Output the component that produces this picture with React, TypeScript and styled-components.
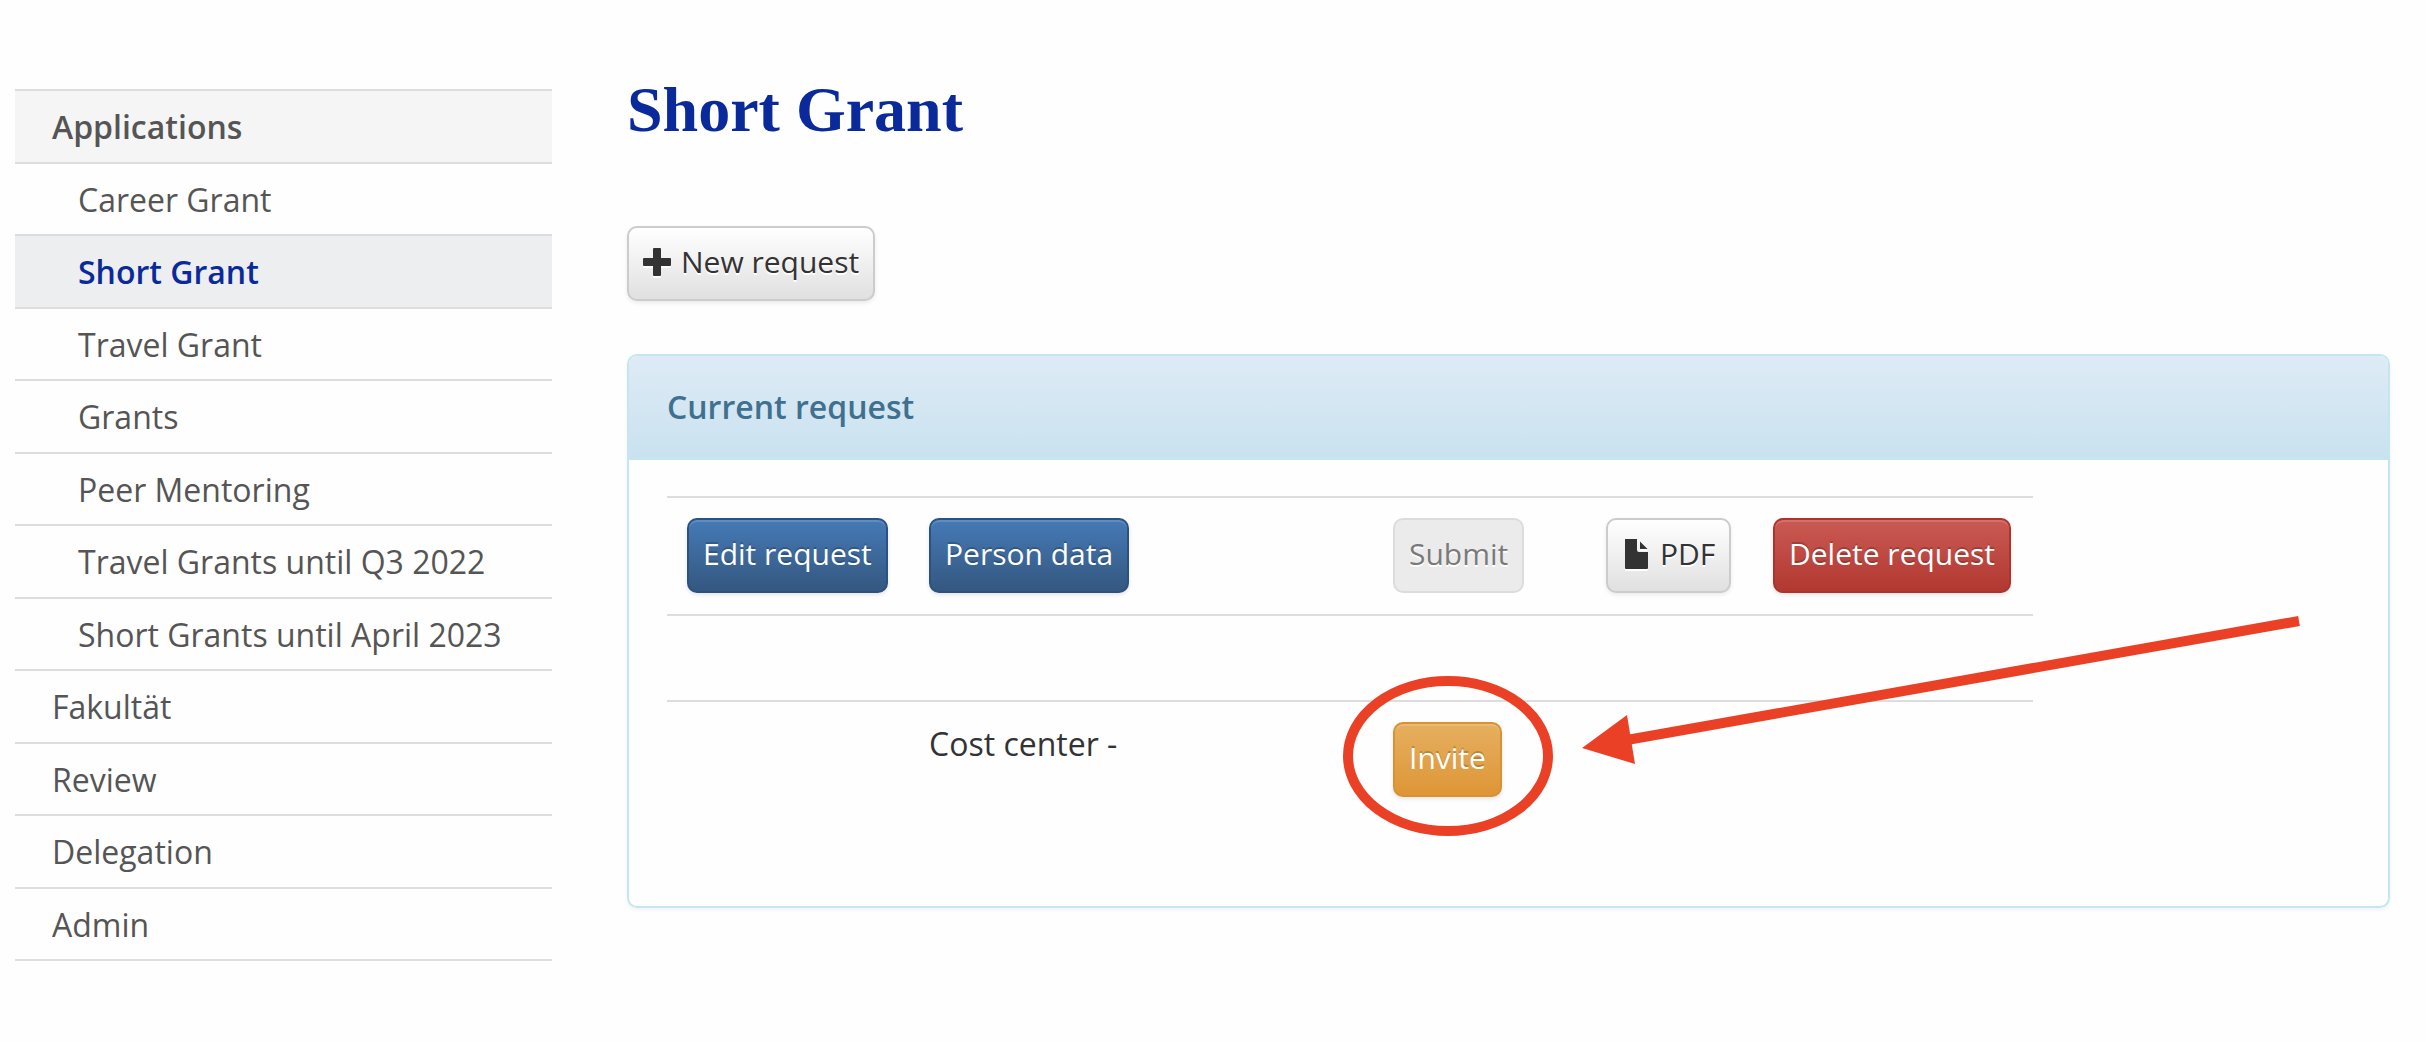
import React from "react";
import styled, { createGlobalStyle, css } from "styled-components";

const GlobalStyle = createGlobalStyle`
  *, *::before, *::after { box-sizing: border-box; }
  body {
    margin: 0;
    background: #fefefe;
    color: #333;
    font-family: "Open Sans", "Noto Sans", sans-serif;
    font-size: 32px;
    line-height: 44px;
  }
`;

const Page = styled.div`
  display: grid;
  grid-template-columns: 537px minmax(0, 1fr);
  column-gap: 75px;
  align-items: start;
  padding: 75px 36px 75px 15px;
`;

const Sidebar = styled.nav`
  margin-top: 14px;
`;

const NavList = styled.ul`
  list-style: none;
  margin: 0;
  padding: 0;
  border-bottom: 2px solid #ddd;
`;

const NavItem = styled.li`
  border-top: 2px solid #ddd;

  &:nth-child(odd) {
    padding-bottom: 1px;
  }
  &:has(> a[data-kind="section"]) {
    background: #f5f5f5;
  }
  &:has(> a[aria-current]) {
    background: #edeef0;
    border-top-color: #d9dce0;
  }
`;

const NavLink = styled.a<{ $nested?: boolean; $strong?: boolean; $active?: boolean }>`
  display: block;
  padding: 14px 16px 12px ${(p) => (p.$nested ? 63 : 37)}px;
  color: ${(p) => (p.$active ? "#0a2a9c" : "#555")};
  font-size: 32px;
  font-weight: ${(p) => (p.$strong || p.$active ? 600 : 400)};
  text-decoration: none;
`;

const Title = styled.h1`
  margin: 0 0 81px;
  color: #0a2a9c;
  font-family: Palatino, "Palatino Linotype", "Liberation Serif", serif;
  font-size: 64px;
  font-weight: 700;
  line-height: 70px;
`;

type Variant = "default" | "primary" | "warning" | "danger";

const variants = {
  default: css`
    color: #333;
    border-color: #ccc;
    background-image: linear-gradient(#fff, #e0e0e0);
    text-shadow: 0 2px 0 #fff;
    box-shadow: 0 2px 4px rgba(0, 0, 0, 0.08);
    svg { filter: drop-shadow(0 2px 0 #fff); }
  `,
  primary: css`
    color: #fff;
    border-color: #2b5280;
    background-image: linear-gradient(#457ab6, #34577f);
  `,
  warning: css`
    color: #fff;
    border-color: #d89134;
    background-image: linear-gradient(#e6af5f, #de9636);
  `,
  danger: css`
    color: #fff;
    border-color: #ad342d;
    background-image: linear-gradient(#ca5a54, #b13830);
  `,
};

const Button = styled.button<{ $variant?: Variant }>`
  display: inline-flex;
  align-items: center;
  gap: 10px;
  padding: 10px 14px 13px;
  border: 2px solid;
  border-radius: 10px;
  font-family: inherit;
  font-size: 30px;
  line-height: 48px;
  white-space: nowrap;
  cursor: pointer;
  vertical-align: top;
  text-shadow: 0 -2px 0 rgba(0, 0, 0, 0.2);
  box-shadow: inset 0 2px 0 rgba(255, 255, 255, 0.15), 0 2px 4px rgba(0, 0, 0, 0.1);
  ${(p) => variants[p.$variant ?? "default"]}

  &:disabled {
    color: #7a7a7a;
    border-color: #dcdcdc;
    background: #ebebeb;
    box-shadow: none;
    cursor: not-allowed;
  }
`;

const Icon = styled.svg`
  display: block;
  fill: currentColor;
`;

const Panel = styled.section`
  margin-top: 53px;
  border: 2px solid #c4e7ef;
  border-radius: 10px;
  box-shadow: 0 2px 4px rgba(0, 0, 0, 0.05);
`;

const PanelHeading = styled.h2`
  margin: 0;
  padding: 29px 38px;
  border-bottom: 2px solid #c4e7ef;
  border-radius: 8px 8px 0 0;
  background-image: linear-gradient(#deebf6, #c9e2ef);
  color: #40708f;
  font-size: 32px;
  font-weight: 600;
`;

const PanelBody = styled.div`
  padding: 36px 38px 38px;
`;

const RequestTable = styled.table`
  border-collapse: separate;
  border-spacing: 0;
  margin-bottom: 50px;
`;

const Row = styled.tr<{ $spacer?: boolean }>`
  height: ${(p) => (p.$spacer ? 86 : 118)}px;
`;

const Cell = styled.td`
  padding: 20px;
  border-top: 2px solid #ddd;
  text-align: left;
  vertical-align: top;
`;

const Highlighted = styled.div`
  position: relative;
  display: inline-block;
`;

const Annotation = styled.svg`
  position: absolute;
  left: -60px;
  top: -110px;
  width: 980px;
  height: 240px;
  pointer-events: none;
`;

const navigation = [
  { label: "Applications", section: true },
  { label: "Career Grant", nested: true },
  { label: "Short Grant", nested: true, active: true },
  { label: "Travel Grant", nested: true },
  { label: "Grants", nested: true },
  { label: "Peer Mentoring", nested: true },
  { label: "Travel Grants until Q3 2022", nested: true },
  { label: "Short Grants until April 2023", nested: true },
  { label: "Fakultät" },
  { label: "Review" },
  { label: "Delegation" },
  { label: "Admin" },
];

const columnWidths = [242, 242, 222, 173, 40, 167, 280];

const PlusIcon = () => (
  <Icon width="28" height="28" viewBox="0 0 28 28" aria-hidden="true">
    <path d="M11 0h6a1 1 0 0 1 1 1v9h9a1 1 0 0 1 1 1v6a1 1 0 0 1-1 1h-9v9a1 1 0 0 1-1 1h-6a1 1 0 0 1-1-1v-9H1a1 1 0 0 1-1-1v-6a1 1 0 0 1 1-1h9V1a1 1 0 0 1 1-1z" />
  </Icon>
);

const FileIcon = () => (
  <Icon width="28" height="30" viewBox="0 0 28 30" aria-hidden="true">
    <path d="M3 0h12v11a2 2 0 0 0 2 2h9v16a1 1 0 0 1-1 1H4a1 1 0 0 1-1-1z" />
    <path d="M18 2.5l7.5 7.5H18z" />
  </Icon>
);

export default function App() {
  return (
    <>
      <GlobalStyle />
      <Page>
        <Sidebar aria-label="Sections">
          <NavList>
            {navigation.map((item) => (
              <NavItem key={item.label}>
                <NavLink
                  href="#"
                  $nested={item.nested}
                  $strong={item.section}
                  $active={item.active}
                  data-kind={item.section ? "section" : undefined}
                  aria-current={item.active ? "page" : undefined}
                >
                  {item.label}
                </NavLink>
              </NavItem>
            ))}
          </NavList>
        </Sidebar>
        <main>
          <Title>Short Grant</Title>
          <Button type="button">
            <PlusIcon />
            New request
          </Button>
          <Panel>
            <PanelHeading>Current request</PanelHeading>
            <PanelBody>
              <RequestTable>
                <colgroup>
                  {columnWidths.map((width, i) => (
                    <col key={i} width={width} />
                  ))}
                </colgroup>
                <tbody>
                  <Row>
                    <Cell><Button type="button" $variant="primary">Edit request</Button></Cell>
                    <Cell><Button type="button" $variant="primary">Person data</Button></Cell>
                    <Cell />
                    <Cell><Button type="button" disabled>Submit</Button></Cell>
                    <Cell />
                    <Cell><Button type="button"><FileIcon />PDF</Button></Cell>
                    <Cell><Button type="button" $variant="danger">Delete request</Button></Cell>
                  </Row>
                  <Row $spacer>
                    <Cell colSpan={7} />
                  </Row>
                  <Row>
                    <Cell />
                    <Cell colSpan={2}>Cost center -</Cell>
                    <Cell>
                      <Highlighted>
                        <Button type="button" $variant="warning">Invite</Button>
                        <Annotation viewBox="-60 -110 980 240" aria-hidden="true">
                          <ellipse cx="55" cy="34" rx="100" ry="75" fill="none" stroke="#ea4126" strokeWidth="10" />
                          <path d="M906-101L234 18" stroke="#ea4126" strokeWidth="10" />
                          <path d="M189 26L234-7L242 42z" fill="#ea4126" />
                        </Annotation>
                      </Highlighted>
                    </Cell>
                    <Cell colSpan={3} />
                  </Row>
                </tbody>
              </RequestTable>
            </PanelBody>
          </Panel>
        </main>
      </Page>
    </>
  );
}
